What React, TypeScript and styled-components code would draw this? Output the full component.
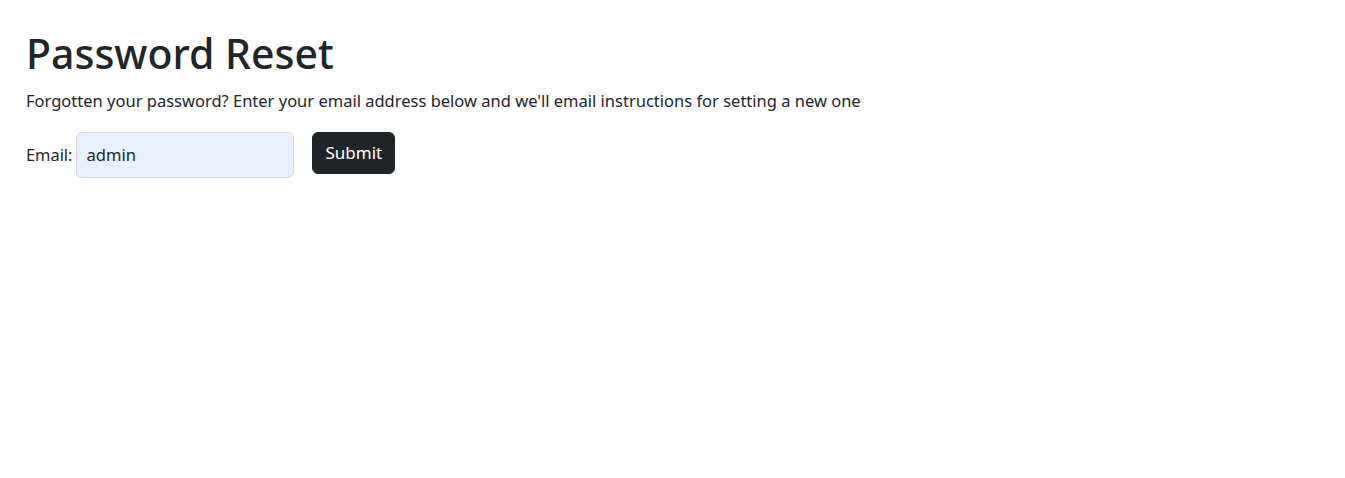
import React from "react";
import styled, { createGlobalStyle } from "styled-components";

const Global = createGlobalStyle`
  html, body { margin: 0; padding: 0; background: #fff; }
  body {
    font-family: "Noto Sans", "Open Sans", sans-serif;
    font-size: 16px;
    line-height: 1.5;
    color: #212529;
  }
`;

const Page = styled.main`
  padding: 29px 26px 24px;
`;

const Title = styled.h1`
  margin: 0 0 11px;
  font-size: 41px;
  font-weight: 500;
  line-height: 1.2;
`;

const Intro = styled.p`
  margin: 0 0 18px;
  font-size: 16.5px;
`;

const Form = styled.form`
  display: flex;
  align-items: center;
  gap: 18px;
  font-size: 16px;
`;

const Field = styled.label`
  display: flex;
  align-items: center;
  gap: 4px;
  font-size: 16.4px;
`;

const Input = styled.input`
  width: 218px;
  height: 46px;
  box-sizing: border-box;
  padding: 6px 9px;
  font: inherit;
  font-size: 16.6px;
  color: #212529;
  background: #e8f0fe;
  border: 1px solid #ced4da;
  border-radius: 6px;
  outline: none;
`;

const Button = styled.button`
  align-self: flex-start;
  height: 42px;
  padding: 0 12px;
  font: inherit;
  font-size: 17px;
  color: #fff;
  background: #212529;
  border: 1px solid #212529;
  border-radius: 6px;
`;

export default function App() {
  return (
    <>
      <Global />
      <Page>
        <Title>Password Reset</Title>
        <Intro>
          Forgotten your password? Enter your email address below and we'll email instructions for setting a new one
        </Intro>
        <Form onSubmit={(e) => e.preventDefault()}>
          <Field>
            Email: <Input type="email" defaultValue="admin" />
          </Field>
          <Button type="submit">Submit</Button>
        </Form>
      </Page>
    </>
  );
}
